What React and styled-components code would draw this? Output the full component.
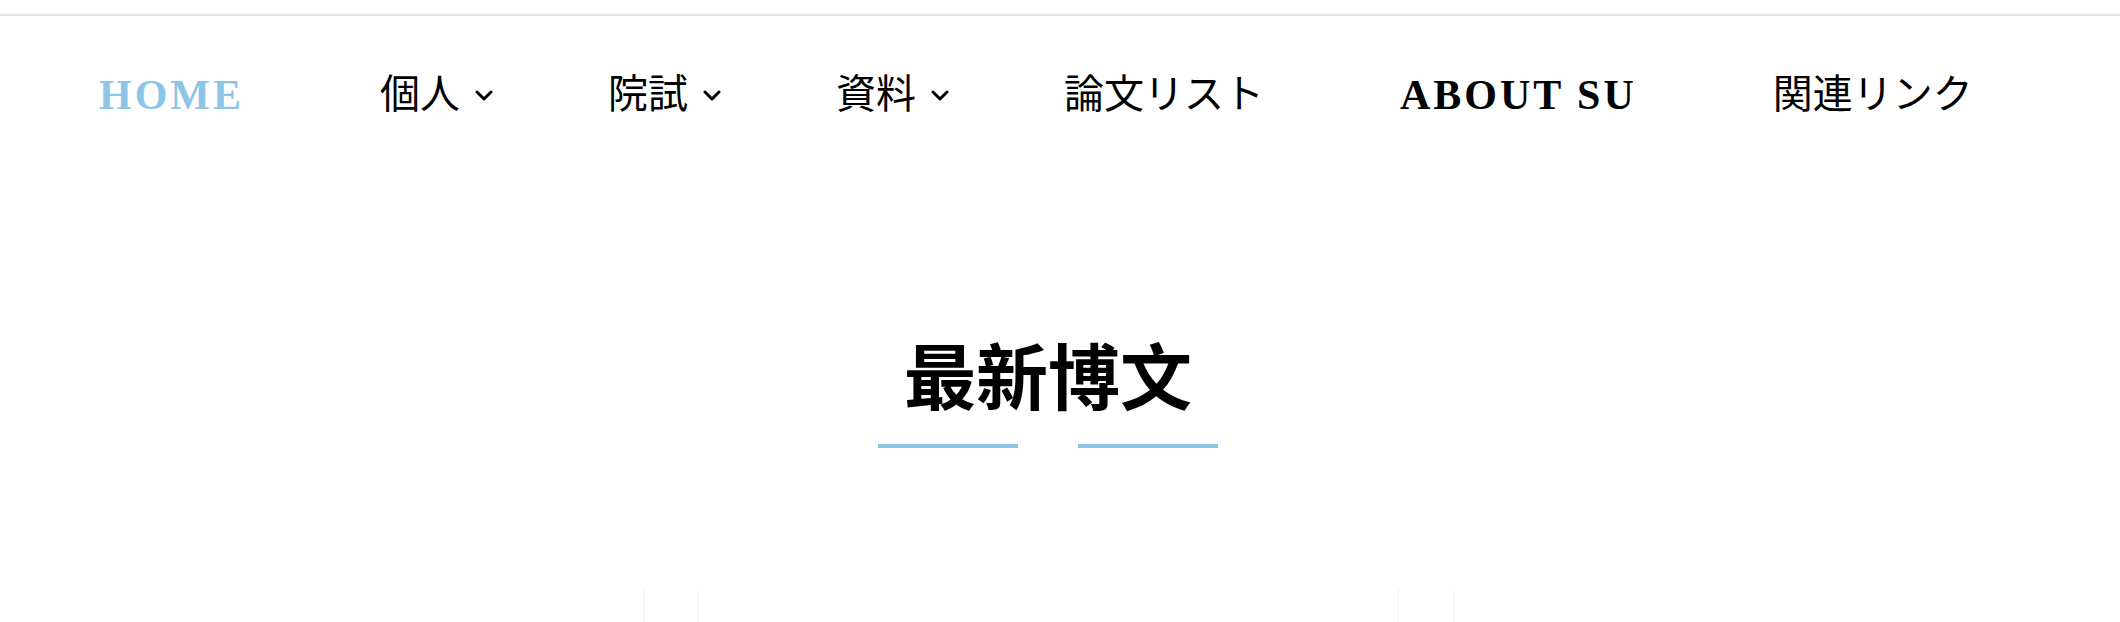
import React from 'react';
import styled, { createGlobalStyle } from 'styled-components';

const accent = '#8dc5e9';

const GlobalStyle = createGlobalStyle`
  html, body {
    margin: 0;
    padding: 0;
    background: #fff;
  }
  body {
    font-family: "Liberation Serif", "Noto Sans CJK JP", serif;
  }
`;

const Page = styled.div`
  padding-top: 14px;
`;

const NavBar = styled.nav`
  display: flex;
  align-items: center;
  height: 158px;
  padding-left: 32px;
  border-top: 2px solid #e6e6e6;
`;

const NavItem = styled.a`
  display: flex;
  align-items: center;
  padding: 0 ${({ $dropdown }) => ($dropdown ? '48px' : '69px')} 0 67px;
  font-size: ${({ $latin }) => ($latin ? '42px' : '40px')};
  font-weight: ${({ $latin }) => ($latin ? 700 : 400)};
  letter-spacing: ${({ $latin }) => ($latin ? '3px' : '0')};
  line-height: 1;
  color: ${({ $active }) => ($active ? accent : '#000')};
  white-space: nowrap;
  text-decoration: none;
  cursor: pointer;
`;

const Chevron = styled.svg`
  width: 18px;
  height: 11px;
  margin-left: 15px;
  flex-shrink: 0;
`;

const Section = styled.section`
  display: flex;
  flex-direction: column;
  align-items: center;
  padding-right: 24px;
`;

const Heading = styled.h2`
  margin: 163px 0 0;
  font-family: "Noto Sans CJK SC", "Noto Sans CJK JP", sans-serif;
  font-size: 72px;
  font-weight: 700;
  line-height: 1;
  color: #000;
`;

const Rules = styled.div`
  display: flex;
  gap: 60px;
  margin-top: 35px;
`;

const Rule = styled.span`
  display: block;
  width: 140px;
  height: 4px;
  background: ${accent};
`;

const Slider = styled.div`
  display: flex;
  justify-content: center;
  width: 811px;
  height: 40px;
  margin-top: 141px;
  box-sizing: border-box;
  border-left: 1px solid #f3f3f3;
  border-right: 1px solid #f3f3f3;
`;

const Slide = styled.div`
  width: 701px;
  box-sizing: border-box;
  border-left: 1px solid #f3f3f3;
  border-right: 1px solid #f3f3f3;
`;

const links = [
  { label: 'HOME', latin: true, active: true },
  { label: '個人', dropdown: true },
  { label: '院試', dropdown: true },
  { label: '資料', dropdown: true },
  { label: '論文リスト' },
  { label: 'ABOUT SU', latin: true },
  { label: '関連リンク' },
];

function Caret() {
  return (
    <Chevron viewBox="0 0 18 11" fill="none">
      <polyline
        points="2,2 9,9 16,2"
        stroke="#000"
        strokeWidth="3"
        strokeLinecap="round"
        strokeLinejoin="round"
      />
    </Chevron>
  );
}

export default function App() {
  return (
    <>
      <GlobalStyle />
      <Page>
        <NavBar>
          {links.map((link) => (
            <NavItem
              key={link.label}
              $latin={link.latin}
              $active={link.active}
              $dropdown={link.dropdown}
            >
              {link.label}
              {link.dropdown && <Caret />}
            </NavItem>
          ))}
        </NavBar>
        <Section>
          <Heading>最新博文</Heading>
          <Rules>
            <Rule />
            <Rule />
          </Rules>
          <Slider>
            <Slide />
          </Slider>
        </Section>
      </Page>
    </>
  );
}
